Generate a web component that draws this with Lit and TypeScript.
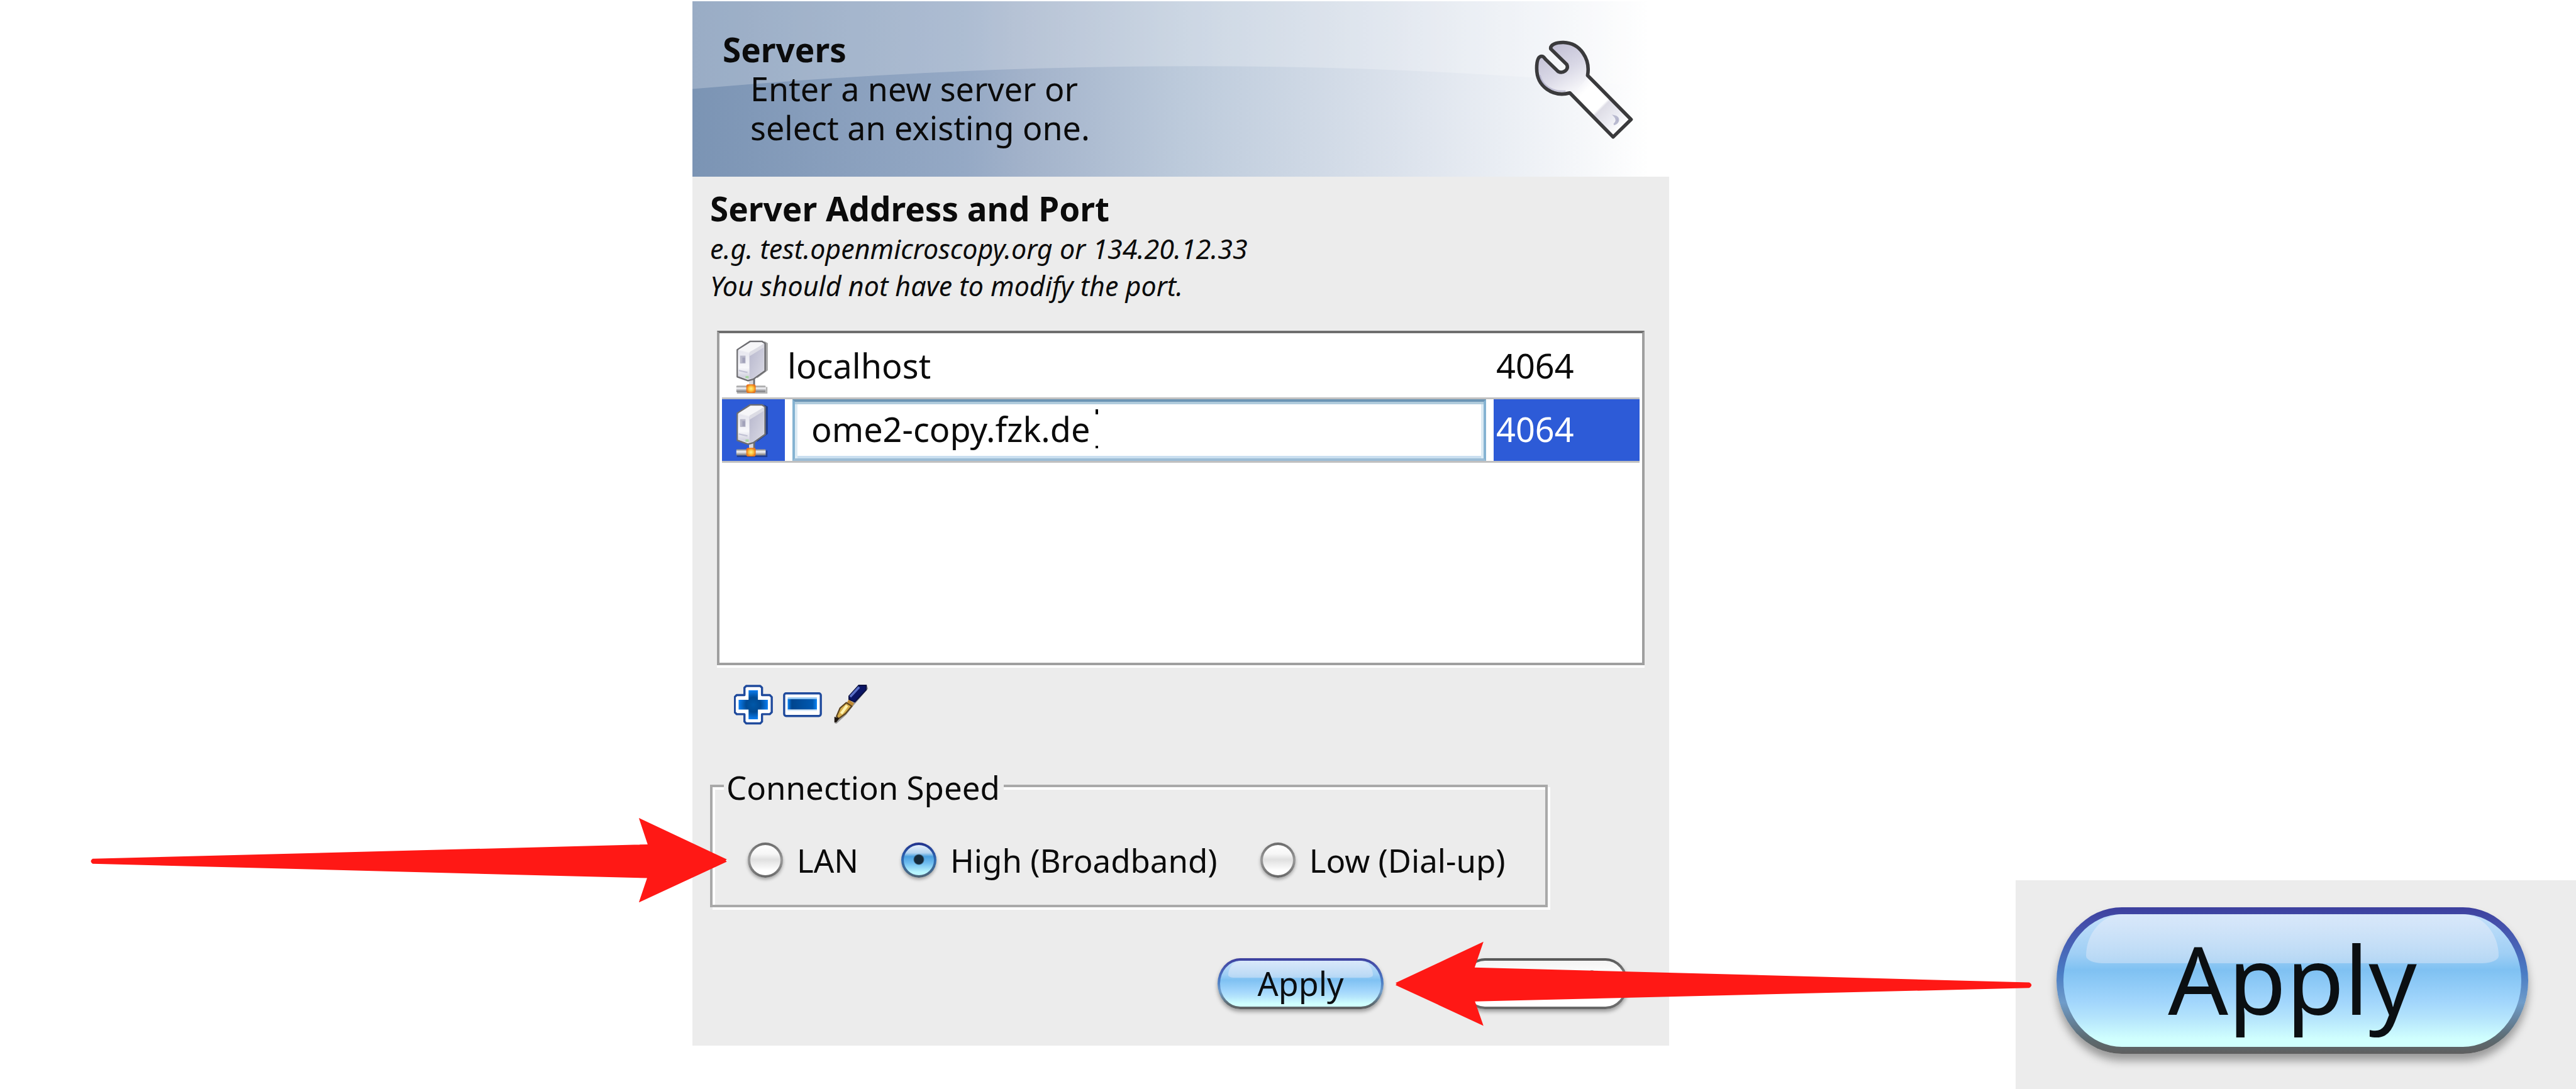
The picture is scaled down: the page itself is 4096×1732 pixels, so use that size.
import { LitElement, html, css, svg } from "lit";
import { customElement, property, state } from "lit/decorators.js";

@customElement("aqua-button")
class AquaButton extends LitElement {
  @property({ type: Boolean }) primary = false;

  static styles = css`
    :host {
      display: block;
    }
    .button {
      position: relative;
      display: block;
      width: 100%;
      box-sizing: border-box;
      border: var(--edge, 4px) solid transparent;
      border-radius: var(--corner, 36px) / 50%;
      padding: var(--inset, 5px 0 6px);
      background:
        linear-gradient(#f4f4f4, #fdfdfd 30%, #ececec 50%, #fff 85%) padding-box,
        linear-gradient(#555, #8a8a8a 40%, #666) border-box;
      box-shadow: 0 var(--drop, 4px) var(--soft, 6px) rgba(0, 0, 0, 0.35);
      font: inherit;
      line-height: var(--line, 62px);
      color: #0b0f12;
      text-align: center;
    }
    .primary {
      background:
        linear-gradient(#c4e0fa, #9fcff5 30%, #7fc1f2 42%, #a2d6fc 66%, #b4e4fc 78%, #d0fffe 94%) padding-box,
        linear-gradient(#3c3f9e, #4550ab 12%, #4a7cc4 45%, #6f9cc9 65%, #5c6a70 90%, #5f5f5f) border-box;
    }
    .primary::before {
      content: "";
      position: absolute;
      inset: 0 5% auto;
      height: 37%;
      border-radius: 9% 9% 4% 4% / 85% 85% 15% 15%;
      background: linear-gradient(rgba(220, 233, 250, 0.85), rgba(195, 221, 245, 0.7));
    }
    .caption {
      position: relative;
    }
  `;

  render() {
    return html`<button type="button" class="button ${this.primary ? "primary" : ""}">
      <span class="caption"><slot></slot></span>
    </button>`;
  }
}

const serverIcon = () => svg`
  <svg class="server-icon" viewBox="100 45 180 285" aria-hidden="true">
    <defs>
      <linearGradient id="front" x1="0" y1="0" x2="0" y2="1">
        <stop offset="0" stop-color="#e6e6ee" /><stop offset="0.6" stop-color="#f8f8fb" /><stop offset="1" stop-color="#c9c9d8" />
      </linearGradient>
      <linearGradient id="side" x1="0" y1="0" x2="1" y2="1">
        <stop offset="0" stop-color="#b6b6cc" /><stop offset="1" stop-color="#d9d9e4" />
      </linearGradient>
      <linearGradient id="pipe" x1="0" y1="0" x2="0" y2="1">
        <stop offset="0" stop-color="#8a8a8a" /><stop offset="0.4" stop-color="#f2f2f6" /><stop offset="1" stop-color="#6f6f72" />
      </linearGradient>
      <radialGradient id="node">
        <stop offset="0" stop-color="#fff08a" /><stop offset="0.55" stop-color="#fdc23a" /><stop offset="1" stop-color="#e8741c" />
      </radialGradient>
    </defs>
    <path d="M252 56 L270 66 V205 L215 246 V238 L252 204 Z" fill="#000" opacity="0.35" />
    <rect x="174" y="240" width="24" height="48" fill="#d8d8de" />
    <path d="M200 244 V284" stroke="#6c6c70" stroke-width="9" />
    <rect x="109" y="284" width="150" height="32" rx="4" fill="url(#pipe)" />
    <path d="M112 320 H264 V290" fill="none" stroke="#000" stroke-opacity="0.3" stroke-width="8" />
    <path d="M114 100 L180 57 H240 L256 68 V208 L196 250 L168 258 L114 238 Z" fill="#eeeef3" stroke="#6e6e72" stroke-width="8" stroke-linejoin="round" />
    <path d="M118 104 L176 118 V250 L118 235 Z" fill="url(#front)" />
    <path d="M176 118 L250 68 V205 L192 248 H176 Z" fill="url(#side)" />
    <path d="M120 100 L182 62 H238 L250 68 L178 114 Z" fill="#f6f6f8" />
    <path d="M176 112 L250 70 V88 L178 132 Z" fill="#dcdce4" />
    <rect x="128" y="130" width="28" height="40" fill="#b9b9ca" />
    <rect x="140" y="140" width="14" height="26" fill="#a2a2ba" />
    <path d="M122 206 L166 216" stroke="#c2c2d4" stroke-width="7" />
    <rect x="156" y="234" width="16" height="12" fill="#a9d6a2" />
    <rect x="160" y="277" width="48" height="44" rx="10" fill="url(#node)" />
  </svg>`;

const wrenchIcon = svg`
  <svg class="wrench" viewBox="0 0 600 600" aria-hidden="true">
    <defs>
      <linearGradient id="jaw" x1="0.3" y1="0.1" x2="0.75" y2="0.9">
        <stop offset="0" stop-color="#c3c1d6" /><stop offset="0.55" stop-color="#d9d8e6" /><stop offset="1" stop-color="#f4f4f8" />
      </linearGradient>
      <linearGradient id="grip" gradientUnits="userSpaceOnUse" x1="270" y1="270" x2="500" y2="500">
        <stop offset="0" stop-color="#f0f0f6" /><stop offset="0.2" stop-color="#ffffff" /><stop offset="0.53" stop-color="#ffffff" />
        <stop offset="0.57" stop-color="#dedde6" /><stop offset="0.8" stop-color="#ececf3" /><stop offset="1" stop-color="#ffffff" />
      </linearGradient>
    </defs>
    <path d="M225 325 L322 228 L550 458 L458 548 Z" fill="url(#grip)" />
    <path d="M236 322 C150 345 66 290 66 196 C66 158 74 134 92 134 C102 134 106 144 114 152 L176 212 C200 224 234 204 220 176 L138 96 C134 74 166 62 204 63 C290 66 342 148 327 232 C318 262 270 312 236 322 Z" fill="url(#jaw)" />
    <path d="M236 322 C150 345 66 290 66 196 C66 158 74 134 92 134 C102 134 106 144 114 152 L176 212 C200 224 234 204 220 176 L138 96 C134 74 166 62 204 63 C290 66 342 148 327 232 L550 458 L458 548 Z" fill="none" stroke="#3a3a3c" stroke-width="18" stroke-linejoin="round" />
    <path d="M82 230 C94 286 150 318 214 312" fill="none" stroke="#a9a7c4" stroke-width="8" opacity="0.6" />
    <path d="M464 440 C492 446 492 474 462 484 C478 470 478 454 464 440 Z" fill="#a9aac6" stroke="#b9bad0" stroke-width="8" />
  </svg>`;

const plusIcon = svg`
  <svg class="tool-icon" viewBox="97 84 200 206" aria-hidden="true">
    <defs><radialGradient id="plus-fill"><stop offset="0" stop-color="#0058a8" /><stop offset="0.5" stop-color="#004a94" /><stop offset="1" stop-color="#0b7df0" /></radialGradient></defs>
    <path d="M160 90 H232 L241 99 V137 H281 L291 147 V225 L281 235 H241 V273 L232 282 H160 L151 273 V235 H111 L101 225 V147 L111 137 H151 V99 Z" fill="#fff" stroke="#1f4a9c" stroke-width="11" stroke-linejoin="round" />
    <path d="M172 112 H220 V161 H271 V211 H220 V261 H172 V211 H121 V161 H172 Z" fill="url(#plus-fill)" />
  </svg>`;

const minusIcon = svg`
  <svg class="tool-icon" viewBox="347 84 200 206" aria-hidden="true">
    <defs><linearGradient id="minus-fill"><stop offset="0" stop-color="#0b84f5" /><stop offset="0.14" stop-color="#00458e" /><stop offset="0.85" stop-color="#0058b0" /><stop offset="1" stop-color="#0b84f5" /></linearGradient></defs>
    <rect x="353" y="128" width="188" height="116" rx="10" fill="#fff" stroke="#1f4a9c" stroke-width="11" />
    <rect x="371" y="149" width="150" height="11" fill="#8ec4f2" />
    <rect x="371" y="158" width="150" height="54" fill="url(#minus-fill)" />
    <rect x="371" y="211" width="150" height="8" fill="#d7eafb" />
  </svg>`;

const penIcon = svg`
  <svg class="tool-icon" viewBox="599 84 200 206" aria-hidden="true">
    <path d="M778 88 L784 104 L722 176 L706 194 L672 238 L622 284 L612 282 Z" fill="#000" opacity="0.35" />
    <path d="M736 87 H774 V110 L716 172 L686 160 V142 Z" fill="#0a1464" stroke="#0b1040" stroke-width="6" />
    <path d="M738 96 L692 146" stroke="#5a70c8" stroke-width="12" />
    <path d="M684 160 L712 178 L702 196 L672 182 Z" fill="#c08a34" />
    <path d="M672 176 L700 194 L668 232 L632 258 L622 246 L640 204 Z" fill="#d9b04c" stroke="#5c4420" stroke-width="7" />
    <path d="M676 190 L646 232" stroke="#fff4b0" stroke-width="14" />
    <path d="M611 248 L636 256 L622 276 L611 278 Z" fill="#1d1610" />
  </svg>`;

@customElement("app-root")
class AppRoot extends LitElement {
  @state() speed = "high";

  private speeds = [
    { id: "lan", label: "LAN" },
    { id: "high", label: "High (Broadband)" },
    { id: "low", label: "Low (Dial-up)" },
  ];

  static styles = css`
    :host {
      display: block;
      font-family: "Noto Sans", "Open Sans", sans-serif;
      font-size: 52px;
      line-height: 62px;
      color: #0b0b0b;
      background: #fff;
    }
    .page {
      position: relative;
      display: grid;
      grid-template-columns: minmax(0, 1101fr) minmax(0, 1553fr) minmax(0, 551fr) minmax(0, 891fr);
      min-height: 100vh;
      overflow: hidden;
    }
    .dialog {
      grid-column: 2;
      align-self: start;
      margin-top: 2px;
      background: #ececec;
    }
    .banner {
      position: relative;
      display: flex;
      justify-content: space-between;
      padding: 46px 45px 47px 48px;
      background: linear-gradient(90deg, #7b94b4, #95a9c5 28%, #a2b2ca 34%, #bccadb 50%, #dfe5ee 75%, #fff 98%);
    }
    .swoosh {
      position: absolute;
      inset: 0;
      width: 100%;
      height: 100%;
    }
    .intro,
    .wrench {
      position: relative;
    }
    .title,
    .heading {
      margin: 0;
      font-size: 53px;
      line-height: 62px;
      font-weight: 700;
    }
    .lead {
      margin: 0 0 0 44px;
    }
    .wrench {
      width: 186px;
      height: 186px;
    }
    .body {
      padding: 20px 39px 58px 28px;
    }
    .hint {
      margin: 3px 0 0;
      font-size: 43px;
      line-height: 59px;
      font-style: italic;
    }
    .list {
      min-height: 520px;
      margin: 42px 0 0 11px;
      padding: 4px 4px 0;
      border: 4px solid #9f9f9f;
      border-top-color: #6e6e6e;
      background: #fff;
      box-shadow: 0 4px 0 #fff;
      font-size: 54px;
    }
    .servers {
      width: 100%;
      table-layout: fixed;
      border-collapse: separate;
      border-spacing: 0;
    }
    .col-icon {
      width: 100px;
    }
    .col-port {
      width: 232px;
    }
    .cell {
      height: 98px;
      padding: 0;
      border-bottom: 3px solid #c0c0c0;
      text-align: left;
    }
    .icon-cell {
      padding-left: 20px;
      box-sizing: border-box;
      line-height: 0;
    }
    .host-cell,
    .port-cell {
      padding: 0 4px 4px;
      height: 94px;
    }
    .edit-cell {
      padding: 0 12px;
    }
    .selected {
      background: #2d5bd7;
      color: #fff;
    }
    .server-icon {
      width: 56px;
      height: 89px;
    }
    .editor {
      position: relative;
      height: 98px;
    }
    .host-input {
      display: block;
      width: 100%;
      height: 100%;
      box-sizing: border-box;
      margin: 0;
      padding: 0 26px 4px;
      border: 4px solid #85b3d2;
      border-top-color: #6b95b5;
      border-bottom-color: #9cbdd6;
      border-radius: 0;
      background: #fff;
      box-shadow: inset 0 4px 0 #b0cbdc, inset 4px 0 0 #dcebf4, inset -4px 0 0 #dcebf4, inset 0 -4px 0 #cadff0;
      font: inherit;
      color: inherit;
      outline: none;
    }
    .caret {
      position: absolute;
      left: 482px;
      top: 16px;
      width: 4px;
      height: 62px;
      background: linear-gradient(#000 8px, transparent 8px 58px, #000 58px);
    }
    .tools {
      display: flex;
      gap: 16px;
      margin: 31px 0 0 38px;
    }
    .tool {
      display: block;
      padding: 0;
      border: 0;
      background: none;
      line-height: 0;
    }
    .tool-icon {
      width: 62px;
      height: 64px;
    }
    .speed {
      min-width: 0;
      margin: 64px 154px 0 0;
      padding: 54px 0 40px 56px;
      border: 4px solid #a9a9a9;
      box-shadow: 4px 4px 0 #fff, inset 4px 4px 0 #fff;
      font-size: 51px;
    }
    .speed-title {
      margin-left: -38px;
      padding: 4px 6px 0 4px;
      background: #ececec;
    }
    .choices {
      display: flex;
      gap: 68px;
    }
    .choice {
      display: flex;
      align-items: center;
      gap: 22px;
      white-space: nowrap;
    }
    .radio {
      appearance: none;
      box-sizing: border-box;
      width: 56px;
      height: 56px;
      margin: 0;
      border: 4px solid transparent;
      border-radius: 50%;
      background:
        linear-gradient(#fff, #f6f6f6 30%, #e0e0e0 48%, #fff 85%) padding-box,
        linear-gradient(#6a6a6a, #999 50%, #666) border-box;
      box-shadow: 0 3px 5px rgba(0, 0, 0, 0.3);
    }
    .radio:checked {
      background:
        radial-gradient(circle at 50% 48%, #152a3a 7px, transparent 9px) padding-box,
        linear-gradient(#e6f0fb, #b4d4f0 26%, #4a9fde 38%, #6fbdf0 60%, #b8f6ff 90%) padding-box,
        linear-gradient(#20308c, #2f6cb4 50%, #4f6472) border-box;
    }
    .actions {
      display: flex;
      justify-content: flex-end;
      gap: 125px;
      margin: 81px 26px 0 0;
    }
    .action {
      width: 264px;
    }
    .closeup {
      grid-column: 4;
      align-self: end;
      padding: 43px 76px 56px 65px;
      background: #ececec;
      font-size: 150px;
    }
    .enlarged {
      --edge: 11px;
      --corner: 104px;
      --drop: 11px;
      --soft: 14px;
      --line: 176px;
      --inset: 14px 0 21px;
    }
    .arrows {
      position: absolute;
      top: 0;
      left: 0;
      width: 100%;
      pointer-events: none;
    }
  `;

  render() {
    return html`
      <main class="page">
        <section class="dialog">
          <header class="banner">
            <svg class="swoosh" viewBox="0 0 1667 300" preserveAspectRatio="none" aria-hidden="true">
              <path d="M0 0 H1667 V150 Q880 72 0 150 Z" fill="#fff" fill-opacity="0.23" />
            </svg>
            <div class="intro">
              <h1 class="title">Servers</h1>
              <p class="lead">Enter a new server or<br />select an existing one.</p>
            </div>
            ${wrenchIcon}
          </header>
          <div class="body">
            <h2 class="heading">Server Address and Port</h2>
            <p class="hint">e.g. test.openmicroscopy.org or 134.20.12.33<br />You should not have to modify the port.</p>
            <div class="list">
              <table class="servers" aria-label="Servers">
                <colgroup>
                  <col class="col-icon" />
                  <col />
                  <col class="col-port" />
                </colgroup>
                <tbody>
                  <tr>
                    <td class="cell icon-cell">${serverIcon()}</td>
                    <td class="cell host-cell">localhost</td>
                    <td class="cell port-cell">4064</td>
                  </tr>
                  <tr>
                    <td class="cell icon-cell selected">${serverIcon()}</td>
                    <td class="cell edit-cell">
                      <div class="editor">
                        <input class="host-input" type="text" aria-label="Server address" .value=${"ome2-copy.fzk.de"} />
                        <span class="caret"></span>
                      </div>
                    </td>
                    <td class="cell port-cell selected">4064</td>
                  </tr>
                </tbody>
              </table>
            </div>
            <div class="tools">
              <button type="button" class="tool" aria-label="Add server">${plusIcon}</button>
              <button type="button" class="tool" aria-label="Remove server">${minusIcon}</button>
              <button type="button" class="tool" aria-label="Edit server">${penIcon}</button>
            </div>
            <fieldset class="speed">
              <legend class="speed-title">Connection Speed</legend>
              <div class="choices">
                ${this.speeds.map(
                  (s) => html`<label class="choice">
                    <input
                      class="radio"
                      type="radio"
                      name="speed"
                      .checked=${this.speed === s.id}
                      @change=${() => (this.speed = s.id)}
                    />${s.label}</label
                  >`,
                )}
              </div>
            </fieldset>
            <div class="actions">
              <aqua-button class="action" primary>Apply</aqua-button>
              <aqua-button class="action">Cancel</aqua-button>
            </div>
          </div>
        </section>
        <aside class="closeup">
          <aqua-button class="enlarged" primary>Apply</aqua-button>
        </aside>
        <svg class="arrows" viewBox="0 0 4395 1858" fill="#ff1815" aria-hidden="true">
          <path d="M158 1465.5 L1105 1441 L1090 1396 L1240 1466.5 L1238 1468.5 L1240 1470.5 L1090 1540 L1104 1498.5 L158 1474 Q152 1470 158 1465.5 Z" />
          <path d="M3462 1676.5 L2516 1651 L2531 1607 L2381 1677.5 L2383 1679 L2381 1681 L2531 1750.5 L2516.5 1709 L3462 1686 Q3470 1681 3462 1676.5 Z" />
        </svg>
      </main>
    `;
  }
}
